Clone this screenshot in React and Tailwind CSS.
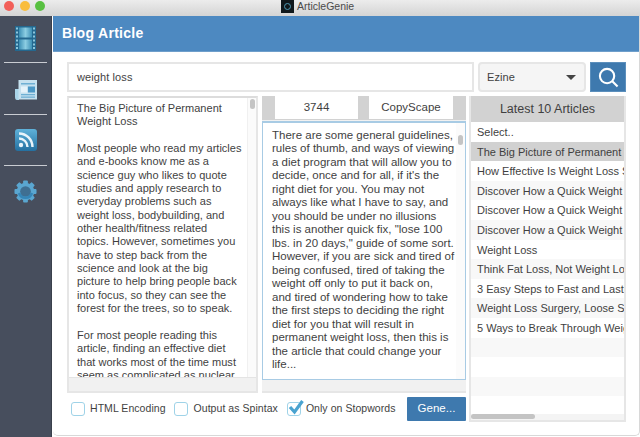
import React from "react";

const font = { fontFamily: '"Liberation Sans", Arial, sans-serif' };

const leftLines = [
  "The Big Picture of Permanent", "Weight Loss", "",
  "Most people who read my articles", "and e-books know me as a", "science guy who likes to quote", "studies and apply research to",
  "everyday problems such as", "weight loss, bodybuilding, and", "other health/fitness related", "topics. However, sometimes you",
  "have to step back from the", "science and look at the big", "picture to help bring people back", "into focus, so they can see the",
  "forest for the trees, so to speak.", "", "For most people reading this", "article, finding an effective diet",
  "that works most of the time must", "seem as complicated as nuclear",
];
const midLines = [
  "There are some general guidelines,", "rules of thumb, and ways of viewing", "a diet program that will allow you to",
  "decide, once and for all, if it's the", "right diet for you. You may not", "always like what I have to say, and",
  "you should be under no illusions", "this is another quick fix, \"lose 100", "lbs. in 20 days,\" guide of some sort.",
  "However, if you are sick and tired of", "being confused, tired of taking the", "weight off only to put it back on,",
  "and tired of wondering how to take", "the first steps to deciding the right", "diet for you that will result in",
  "permanent weight loss, then this is", "the article that could change your", "life...",
];
const rows = [
  "Select..", "The Big Picture of Permanent Weight Loss", "How Effective Is Weight Loss Surgery", "Discover How a Quick Weight Loss Diet",
  "Discover How a Quick Weight Loss Plan", "Discover How a Quick Weight Loss Tip", "Weight Loss", "Think Fat Loss, Not Weight Loss Now",
  "3 Easy Steps to Fast and Lasting Results", "Weight Loss Surgery, Loose Skin Removal", "5 Ways to Break Through Weight Plateaus", "", "", "", "",
];

function Film() {
  return (
    <svg width="21" height="25" viewBox="0 0 21 25" className="block">
      <defs>
        <linearGradient id="fg" x1="0" y1="0" x2="1" y2="0">
          <stop offset="0" stopColor="#3c8fb5" /><stop offset="0.5" stopColor="#8ccde2" /><stop offset="1" stopColor="#3c8fb5" />
        </linearGradient>
      </defs>
      <rect width="21" height="25" fill="#24688f" />
      <rect x="4" y="1.5" width="13" height="10" fill="url(#fg)" />
      <rect x="4" y="13.5" width="13" height="10" fill="url(#fg)" />
      {[1.5, 5.5, 9.5, 13.5, 17.5, 21].map((y) => (
        <g key={y}><rect x="1" y={y} width="2" height="2" fill="#8cc6dc" /><rect x="18" y={y} width="2" height="2" fill="#8cc6dc" /></g>
      ))}
    </svg>
  );
}
function News() {
  return (
    <svg width="22" height="20" viewBox="0 0 22 20" className="block">
      <path d="M0 9 H4 V20 H2 Q0 20 0 17 Z" fill="#a9d4e8" />
      <rect x="3.5" y="0" width="18.5" height="19.5" fill="#c6e1ef" />
      <rect x="6" y="3" width="14" height="1.5" fill="#6fb0d4" />
      <rect x="6" y="6.5" width="6" height="6" fill="#e6f3fa" />
      <rect x="13" y="6.5" width="7" height="6" fill="#4c98c6" />
      <rect x="6" y="14" width="14" height="1.3" fill="#6fb0d4" />
      <rect x="6" y="16.5" width="14" height="1.3" fill="#6fb0d4" />
    </svg>
  );
}
function Rss() {
  return (
    <svg width="22" height="22" viewBox="0 0 22 22" className="block">
      <defs>
        <linearGradient id="rg" x1="0" y1="0" x2="0" y2="1">
          <stop offset="0" stopColor="#5fb2da" /><stop offset="1" stopColor="#2470a0" />
        </linearGradient>
      </defs>
      <rect width="22" height="22" rx="3" fill="url(#rg)" />
      <circle cx="6" cy="16" r="2.2" fill="#e8f4fa" />
      <path d="M4 9.5 A8.5 8.5 0 0 1 12.5 18" fill="none" stroke="#e8f4fa" strokeWidth="2.4" />
      <path d="M4 4.5 A13.5 13.5 0 0 1 17.5 18" fill="none" stroke="#e8f4fa" strokeWidth="2.4" />
    </svg>
  );
}
function Gear() {
  const teeth = [0, 45, 90, 135, 180, 225, 270, 315];
  return (
    <svg width="23" height="23" viewBox="0 0 24 24" className="block">
      {teeth.map((a) => (
        <rect key={a} x="9.5" y="0.5" width="5" height="4" rx="1" fill="#5aa6d0" transform={`rotate(${a} 12 12)`} />
      ))}
      <circle cx="12" cy="12" r="9.2" fill="#5aa6d0" />
      <circle cx="12" cy="12" r="5.6" fill="#3f6f92" />
      <path d="M4 14 A8.4 8.4 0 0 0 20 14 L17.4 13 A5.6 5.6 0 0 1 6.6 13 Z" fill="#3586b8" />
    </svg>
  );
}
function Box({ checked }) {
  return (
    <span className="relative w-[14px] h-[14px] rounded-[3px] border border-[#9fd3e8] bg-white shrink-0 block">
      {checked && (
        <svg className="absolute left-[-1px] top-[-5px]" width="18" height="18" viewBox="0 0 18 18">
          <path d="M3 9 L7.5 14 L15.5 3" fill="none" stroke="#4aa3d0" strokeWidth="3.2" />
        </svg>
      )}
    </span>
  );
}

export default function App() {
  return (
    <div style={font} className="w-[640px] h-[437px] overflow-hidden flex flex-col bg-white text-[#3f3f3f]">
      <div className="h-[16px] shrink-0 bg-gradient-to-b from-[#ececec] to-[#d4d4d4] flex items-start relative">
        <div className="flex gap-[5.5px] pl-[4px] pt-[1px]">
          <span className="w-[10px] h-[10px] rounded-full bg-[#f25f58]" />
          <span className="w-[10px] h-[10px] rounded-full bg-[#f9bd3c]" />
          <span className="w-[10px] h-[10px] rounded-full bg-[#58c041]" />
        </div>
        <div className="absolute left-[281px] top-0 flex items-center gap-[3px] text-[10.5px] text-[#4a4a4a] h-[13px]">
          <span className="w-[13px] h-[13px] bg-[#10181c] flex items-center justify-center">
            <span className="w-[7px] h-[7px] rounded-full border border-[#4f9ab5]" />
          </span>
          ArticleGenie
        </div>
      </div>
      <div className="flex-1 flex min-h-0">
        <aside className="w-[52px] shrink-0 bg-[#474e5d] border-r border-[#3a404c] flex flex-col items-center pt-[10px]">
          <Film />
          <div className="w-[43px] h-[1px] bg-[#c9ccd2] mt-[11px] mb-[17px]" />
          <News />
          <div className="w-[43px] h-[1px] bg-[#c9ccd2] mt-[14px] mb-[14px]" />
          <Rss />
          <div className="w-[43px] h-[1px] bg-[#c9ccd2] mt-[14px] mb-[14px]" />
          <Gear />
        </aside>
        <main className="w-[587px] ml-[1px] h-[420px] bg-white rounded-b-[5px] border-b border-r border-[#d8d8d8] flex flex-col">
          <div className="h-[36px] shrink-0 bg-[#4d89c1] border-b border-[#6f9fcb] flex items-center pl-[9px] text-[14px] font-bold text-white tracking-[0.3px]">
            Blog Article
          </div>
          <div className="flex flex-1 flex-col pl-[14px] pt-[10px]">
            <div className="flex h-[30px] items-stretch">
              <div className="w-[407px] border-2 border-[#e6e6e6] flex items-center pl-[8px] text-[11px] tracking-[0.1px] text-[#444]">weight loss</div>
              <div className="w-[108px] ml-[4px] rounded-[4px] border-2 border-[#e6e6e6] bg-[#f5f5f5] flex items-center justify-between pl-[7px] pr-[8px] text-[11px] tracking-[0.1px]">
                Ezine
                <span className="w-0 h-0 border-x-[5px] border-x-transparent border-t-[5px] border-t-[#444]" />
              </div>
              <div className="w-[36px] ml-[4px] bg-[#3e79ae] border border-[#5c8fbc] flex items-center justify-center">
                <svg width="21" height="21" viewBox="0 0 22 22" fill="none" stroke="#fff" strokeWidth="2.2">
                  <circle cx="9.5" cy="9.5" r="7.5" /><path d="M15 15 L20.5 20.5" />
                </svg>
              </div>
            </div>
            <div className="flex mt-[4px]">
              <div className="w-[399px] flex flex-col">
                <div className="flex h-[297px]">
                  <div className="w-[191px] border-2 border-[#e6e6e6] border-t-[#dcdcdc] flex flex-col">
                    <div className="flex flex-1 min-h-0">
                      <div className="flex-1 overflow-hidden pl-[8px] pt-[4px] text-[11px] tracking-[0.02px] whitespace-pre">
                        {leftLines.map((l, i) => <div key={i} className="h-[13.35px] leading-[13.35px]">{l}</div>)}
                      </div>
                      <div className="w-[9px] bg-[#fbfbfb] border-l border-[#f0f0f0] pt-[1px] flex justify-center">
                        <div className="w-[5px] h-[10px] rounded-full bg-[#c4c4c4]" />
                      </div>
                    </div>
                    <div className="h-[14px] shrink-0 bg-[#f1f1f1] border-t border-[#e4e4e4]" />
                  </div>
                  <div className="w-[204px] ml-[4px] flex flex-col bg-[#f1f1f1] border-b-2 border-[#e6e6e6]">
                    <div className="h-[24px] bg-[#d2d2d2] flex px-[13px] justify-between items-start shrink-0">
                      <div className="w-[83px] h-[23px] bg-white flex items-center justify-center text-[11.5px]">3744</div>
                      <div className="w-[84px] h-[23px] bg-white flex items-center justify-center text-[11.5px]">CopyScape</div>
                    </div>
                    <div className="h-[259px] mt-[1px] border border-[#a8cbe4] border-t-2 bg-white flex shrink-0">
                      <div className="flex-1 pl-[9px] pt-[6px] text-[11.5px] whitespace-pre overflow-hidden">
                        {midLines.map((l, i) => <div key={i} className="h-[13.47px] leading-[13.47px]">{l}</div>)}
                      </div>
                      <div className="w-[9px] bg-[#fbfbfb] flex justify-center pt-[12px]">
                        <div className="w-[5px] h-[10px] rounded-full bg-[#c4c4c4]" />
                      </div>
                    </div>
                  </div>
                </div>
                <div className="flex items-center h-[24px] mt-[4px] pl-[4px] text-[10.5px] tracking-[0.05px] whitespace-nowrap">
                  <Box /><span className="ml-[5px]">HTML Encoding</span>
                  <span className="ml-[8px]"><Box /></span><span className="ml-[6px]">Output as Spintax</span>
                  <span className="ml-[9px]"><Box checked /></span><span className="ml-[5px]">Only on Stopwords</span>
                  <div className="ml-auto w-[59px] h-[24px] bg-[#3e79ae] text-white text-[11.5px] flex items-center justify-center rounded-[1px]">Gene...</div>
                </div>
              </div>
              <div className="w-[157px] ml-[3px] h-[326px] border-2 border-t-0 border-[#e6e6e6] flex flex-col overflow-hidden">
                <div className="h-[26px] pt-[1px] shrink-0 bg-[#d2d2d2] flex items-center justify-center text-[12.5px]">Latest 10 Articles</div>
                <div className="flex-1 min-h-0 overflow-hidden">
                  {rows.map((r, i) => (
                    <div key={i} className={`h-[19.6px] pl-[6px] pt-[1px] flex items-center whitespace-nowrap text-[11px] ${i === 1 ? "bg-[#d1d1d1]" : i % 2 === 0 ? "bg-white" : "bg-[#f8f8f8]"}`}>{r}</div>
                  ))}
                </div>
                <div className="h-[6px] shrink-0 bg-[#f4f4f4]">
                  <div className="w-[64px] h-[5px] rounded-full bg-[#c4c4c4]" />
                </div>
              </div>
            </div>
          </div>
        </main>
      </div>
    </div>
  );
}
